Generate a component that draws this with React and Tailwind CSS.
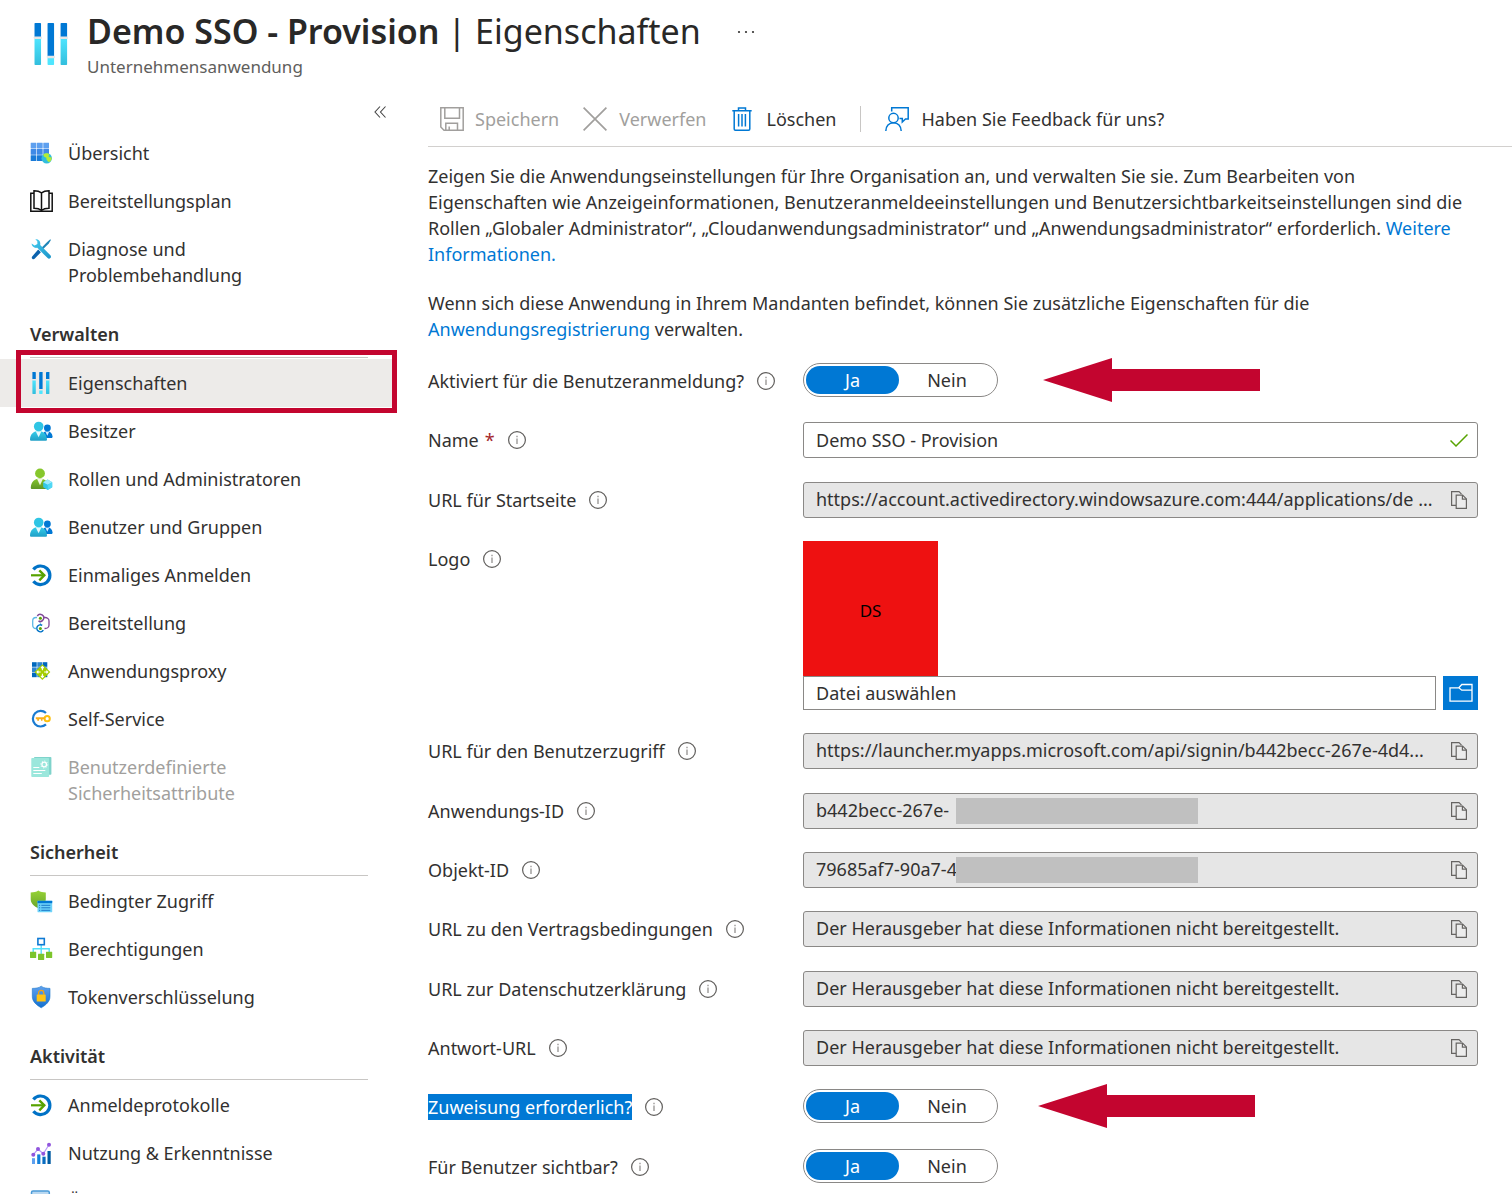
import React from "react";

const svg24 = { viewBox: "0 0 24 24", className: "h-[26px] w-6 shrink-0", "aria-hidden": true };

function SliderBars() {
  const bars = [
    [3.4, 8.6],
    [10.2, 18.6],
    [17, 8.6],
  ];
  return (
    <>
      <defs>
        <linearGradient id="cyanBar" x1="0" y1="0" x2="0" y2="1">
          <stop offset="0" stopColor="#50e6ff" />
          <stop offset="1" stopColor="#32bedd" />
        </linearGradient>
      </defs>
      {bars.map(([x, y]) => (
        <g key={x}>
          <rect x={x} y="1" width="3.4" height={y - 1} rx="0.4" fill="#0078d4" />
          <rect x={x} y={y} width="3.4" height={23 - y} rx="0.4" fill={y > 10 ? "#50e6ff" : "url(#cyanBar)"} />
          <rect x={x - 0.4} y={y - 0.5} width="4.2" height="1.3" rx="0.4" fill="#e6e6e6" />
        </g>
      ))}
    </>
  );
}

function OverviewIcon() {
  const colors = ["#5ea0ef", "#3f8ae6", "#1a7bd8"];
  return (
    <svg {...svg24}>
      {[0, 1, 2].map((r) =>
        [0, 1, 2].map((c) => (
          <rect key={`${r}${c}`} x={1.7 + c * 6.3} y={1.7 + r * 6.3} width="5.7" height="5.7" rx="0.3" fill={colors[r]} />
        ))
      )}
      <circle cx="17.7" cy="17.3" r="5.2" fill="#32bedd" />
      <path d="M14.2 13.5c1.5-1.3 3.600-1.600 5.200-1l1.300 1.400-1.500 1.100 1.800 1.500 1.500-.5c.4 1.700-.1 3.400-1.200 4.600l-1.800.3-1.900-2.200-.3-2-2.100-.9z" fill="#b4ec36" />
    </svg>
  );
}

function BookIcon() {
  return (
    <svg {...svg24} fill="none" stroke="#111" strokeWidth="1.5">
      <path d="M5 4.300H1.800V22.200H23.200V4.300H20" />
      <path d="M12.500 3.800C10.500 2.300 8 1.800 5 1.800V19.300C8 19.300 10.500 19.800 12.500 21.500C14.500 19.800 17 19.300 20 19.300V1.800C17 1.800 14.500 2.300 12.500 3.800ZM12.500 3.800V21.500" />
    </svg>
  );
}

function ToolsIcon() {
  return (
    <svg {...svg24}>
      <defs>
        <linearGradient id="wrench" x1="0" y1="0" x2="1" y2="1">
          <stop offset="0" stopColor="#45cdf0" />
          <stop offset="1" stopColor="#1a93c8" />
        </linearGradient>
      </defs>
      <path d="M21.300 2.200l.6.700-2.100 3.700-6.300 6.100-1.500-1.400 6.200-6.300z" fill="#1f86b8" />
      <path d="M9.200 12.500l2.700 2.700-6.300 6.600c-.7.600-1.600.6-2.300-.1s-.7-1.700-.1-2.300z" fill="#0b62ad" />
      <path d="M6.300 2.300c2.900-.5 5.300 1.700 5 4.700l-.1 1 10.200 10.200c.8.900.8 2.100 0 2.900s-2 .8-2.800 0L8.300 10.800C5.300 11.600 2.600 9.300 2.600 6.600L5.600 8.600 8.400 6.900 8.300 4.200z" fill="url(#wrench)" />
    </svg>
  );
}

function PeopleIcon() {
  return (
    <svg {...svg24}>
      <defs>
        <linearGradient id="person" x1="0" y1="0" x2="0" y2="1">
          <stop offset="0" stopColor="#35cdea" />
          <stop offset="1" stopColor="#1f9fc6" />
        </linearGradient>
      </defs>
      <path d="M14.500 13.500c1-.8 2.400-1.200 3.700-1.200 3 0 5 2 5.400 5.200.1.900-.5 1.500-1.300 1.500h-6z" fill="#0078d4" />
      <path d="M16.300 12.500l2 4.200 2-4.200z" fill="#d8edfb" />
      <circle cx="18.400" cy="9" r="3.400" fill="#0078d4" />
      <path d="M1 20.200c.4-5 3.600-8.100 8.500-8.100s8 3.100 8.500 8.100c.1.900-.6 1.600-1.400 1.600H2.400C1.600 21.800.9 21.100 1 20.200z" fill="url(#person)" />
      <path d="M6.700 12.300L9.600 18.300 12.500 12.300z" fill="#e6f9fd" />
      <circle cx="9.700" cy="7.500" r="4.800" fill="#2fc5e4" />
    </svg>
  );
}

function RolesIcon() {
  return (
    <svg {...svg24}>
      <defs>
        <linearGradient id="greenPerson" x1="0" y1="0" x2="0" y2="1">
          <stop offset="0" stopColor="#86c72c" />
          <stop offset="1" stopColor="#5e9624" />
        </linearGradient>
      </defs>
      <path d="M1.800 20.500c.4-5.400 3.500-9 9-9s8.600 3.600 9 9c.1.900-.5 1.600-1.400 1.600H3.200c-.9 0-1.500-.7-1.400-1.600z" fill="url(#greenPerson)" />
      <path d="M8 11.800L11 18.200 14 11.800z" fill="#f0f8e4" />
      <circle cx="11" cy="6.400" r="4.900" fill="#86c72c" />
      <path d="M18.700 12.600l4.500 2.600v5.100l-4.500 2.600-4.500-2.600v-5.100z" fill="#32c8ea" />
      <path d="M18.700 12.600l4.500 2.600-4.500 2.600-4.500-2.600z" fill="#9cebff" />
      <path d="M18.700 17.800l4.500-2.600v5.100l-4.500 2.600z" fill="#50d8f5" />
    </svg>
  );
}

function SignOnIcon() {
  return (
    <svg {...svg24} fill="none">
      <path d="M4.400 6.400A9.300 9.300 0 1 1 4.400 18.200" stroke="#0072c6" strokeWidth="3.200" />
      <path d="M2 12.300H15" stroke="#57a300" strokeWidth="2.200" />
      <path d="M10.300 7.300L15.300 12.300 10.300 17.300" stroke="#57a300" strokeWidth="2.400" />
    </svg>
  );
}

function ProvisionIcon() {
  return (
    <svg {...svg24} fill="none" strokeWidth="1.300">
      <path d="M8 6.500H7C5 6.500 3.700 8 3.700 10v4c0 2 1.300 3.500 3.300 3.500" stroke="#5cb8e6" />
      <path d="M15 6.500h1c2.200 0 4 1.500 4 3.500v4c0 2-1.800 3.500-4 3.500h-.5" stroke="#804998" />
      <path d="M8.300 5A3.500 3.500 0 1 1 9.500 10" stroke="#804998" strokeWidth="1.500" />
      <path d="M14.300 19.200A3.500 3.500 0 1 1 13.200 14.300" stroke="#0072c6" strokeWidth="1.500" />
      <circle cx="11.400" cy="7.200" r="1.500" fill="#57a300" />
      <circle cx="11.400" cy="17.400" r="1.500" fill="#57a300" />
      <path d="M10.500 11.500l1.300.9-1.300 1" stroke="#5cb8e6" strokeWidth="0.800" />
    </svg>
  );
}

function ProxyIcon() {
  return (
    <svg {...svg24}>
      {[0, 1, 2].map((r) =>
        [0, 1, 2].map((c) => (
          <rect key={`${r}${c}`} x={3 + c * 5.300} y={3.200 + r * 5.200} width="4.700" height="4.600" fill={(r + c) % 2 ? "#2f86cf" : "#0068bd"} />
        ))
      )}
      <path d="M13.400 5.200L21.300 13 13.400 20.900 5.500 13z" fill="#a5ce00" />
      <path
        d="M13.400 7.800v3.500M12 9l1.400-1.400L14.800 9M13.400 18.200v-3.500M12 17l1.400 1.400 1.400-1.400M8.200 13h3.500M9.400 11.600L8 13l1.400 1.400M18.600 13h-3.500M17.400 11.600l1.400 1.400-1.400 1.400"
        stroke="#fff"
        strokeWidth="1.100"
        fill="none"
      />
    </svg>
  );
}

function SelfServiceIcon() {
  return (
    <svg {...svg24} fill="none">
      <path d="M17 6A7.800 7.800 0 1 0 17 17.400" stroke="#1a7bd0" strokeWidth="2.200" />
      <circle cx="18.200" cy="11.700" r="2.600" stroke="#fcc00f" strokeWidth="2" />
      <path d="M15.600 11.200H6.800M8.200 12.800H10M12 12.800H13.500" stroke="#f9ae1b" strokeWidth="1.900" />
    </svg>
  );
}

function AttributesIcon() {
  return (
    <svg {...svg24}>
      <rect x="5" y="2" width="17.400" height="17.800" rx="0.800" fill="#7fd3cb" />
      <rect x="2.300" y="3" width="17.800" height="19" rx="0.800" fill="#9be7dc" />
      <circle cx="15.200" cy="9.500" r="2.300" fill="none" stroke="#fff" strokeWidth="1.300" />
      <circle cx="15.200" cy="9.500" r="3.500" fill="none" stroke="#fff" strokeWidth="0.900" strokeDasharray="1.100 1.600" />
      <path d="M4.300 12.500h6M4.300 15.500h12M4.300 18.500h8.500" stroke="#fff" strokeWidth="1.200" />
    </svg>
  );
}

function ConditionalIcon() {
  return (
    <svg {...svg24}>
      <defs>
        <linearGradient id="greenShield" x1="0" y1="0" x2="0" y2="1">
          <stop offset="0" stopColor="#97d335" />
          <stop offset="1" stopColor="#6aa52a" />
        </linearGradient>
      </defs>
      <path d="M9.300 1.400c2 1.600 4.700 1.800 7.500 2v6.800c0 4.500-3.600 7-7.500 9-3.900-2-7.600-4.500-7.600-9V3.400c2.900-.2 5.600-.4 7.600-2z" fill="url(#greenShield)" />
      <rect x="8.500" y="11.800" width="14.700" height="11.400" rx="0.400" fill="#6fd3f9" />
      <rect x="8.500" y="11.800" width="14.700" height="2.400" fill="#0078d4" />
      <path d="M10 16.300h1.200M10 18.800h1.200M10 21.300h1.200M12.300 16.300h9M12.300 18.800h9M12.300 21.300h9" stroke="#1b78c8" strokeWidth="1" />
    </svg>
  );
}

function PermissionsIcon() {
  return (
    <svg {...svg24}>
      <path d="M12.200 8v9M4.200 15.500V11.700H20.200V15.500" fill="none" stroke="#50e0fa" strokeWidth="1.400" />
      <rect x="8.900" y="1.500" width="6.400" height="6.200" fill="#fff" stroke="#0f7ad4" strokeWidth="1.600" />
      <rect x="1" y="14.700" width="6.200" height="6.300" rx="0.400" fill="#7cc52c" />
      <rect x="9" y="16.800" width="6.200" height="6.200" rx="0.400" fill="#7cc52c" />
      <rect x="17" y="14.700" width="6.200" height="6.300" rx="0.400" fill="#7cc52c" />
    </svg>
  );
}

function TokenIcon() {
  return (
    <svg {...svg24}>
      <defs>
        <linearGradient id="tokenShield" x1="0" y1="0" x2="0" y2="1">
          <stop offset="0" stopColor="#5ea0ef" />
          <stop offset="1" stopColor="#1370cf" />
        </linearGradient>
      </defs>
      <path d="M12.200 1.200c2.500 1.900 5.500 2.100 8.800 2.200v8c0 5.300-4.300 8.700-8.800 11.400C7.700 20.100 3.300 16.700 3.300 11.400v-8c3.300-.1 6.400-.3 8.900-2.200z" fill="url(#tokenShield)" stroke="#1b77c9" strokeWidth="0.600" />
      <path d="M9.600 9.800V8.100c0-1.600 1.100-2.700 2.600-2.700s2.600 1.100 2.600 2.700v1.700" fill="none" stroke="#f5a30f" strokeWidth="1.300" />
      <rect x="7.700" y="9.500" width="9" height="6.900" rx="0.500" fill="#ffc415" />
    </svg>
  );
}

function UsageIcon() {
  return (
    <svg {...svg24}>
      <rect x="3" y="17.200" width="3" height="5.800" fill="#5ea0ef" />
      <rect x="8.200" y="13.400" width="3.200" height="9.600" fill="#1380da" />
      <rect x="13.400" y="15.700" width="3.200" height="7.300" fill="#0a6cc0" />
      <rect x="18.500" y="10" width="3.200" height="13" fill="#005ba1" />
      <path d="M4.300 13.700L9 8.200l5.300 4.500L20 3.700" fill="none" stroke="#b796f9" strokeWidth="1.200" />
      <g fill="#9155dd">
        <circle cx="4.300" cy="13.700" r="2" />
        <circle cx="9" cy="8" r="2" />
        <circle cx="14.300" cy="12.700" r="2" />
        <circle cx="20" cy="3.700" r="2" />
      </g>
    </svg>
  );
}

function AuditIcon() {
  return (
    <svg {...svg24}>
      <rect x="2.500" y="2" width="17.800" height="20" rx="1.500" fill="#b9d8f1" stroke="#4b9bd8" strokeWidth="1.500" />
    </svg>
  );
}

function PropertiesIcon() {
  return (
    <svg {...svg24}>
      <SliderBars />
    </svg>
  );
}

function InfoIcon() {
  return (
    <svg viewBox="0 0 20 20" className="size-5 shrink-0" role="img" aria-label="Info" fill="none">
      <circle cx="10" cy="10" r="8.400" stroke="#605e5c" strokeWidth="1.200" />
      <path d="M10 8.500V14M10 5.800V7.200" stroke="#8a8886" strokeWidth="1.200" />
    </svg>
  );
}

function CopyIcon() {
  return (
    <svg viewBox="0 0 18 20" className="h-5 w-[18px]" aria-hidden="true" fill="none" stroke="#666462" strokeWidth="1.200">
      <path d="M6 15.400H1.600V1.600H9L11.500 4.100" />
      <path d="M6.200 5.100H12.600L16.400 8.900V18.400H6.200Z" fill="#ececec" />
      <path d="M12.400 5.100V9.100H16.400" />
    </svg>
  );
}

const navGroups = [
  {
    items: [
      ["Übersicht", OverviewIcon],
      ["Bereitstellungsplan", BookIcon],
      ["Diagnose und Problembehandlung", ToolsIcon],
    ],
  },
  {
    title: "Verwalten",
    items: [
      ["Eigenschaften", PropertiesIcon],
      ["Besitzer", PeopleIcon],
      ["Rollen und Administratoren", RolesIcon],
      ["Benutzer und Gruppen", PeopleIcon],
      ["Einmaliges Anmelden", SignOnIcon],
      ["Bereitstellung", ProvisionIcon],
      ["Anwendungsproxy", ProxyIcon],
      ["Self-Service", SelfServiceIcon],
      ["Benutzerdefinierte Sicherheitsattribute", AttributesIcon],
    ],
  },
  {
    title: "Sicherheit",
    items: [
      ["Bedingter Zugriff", ConditionalIcon],
      ["Berechtigungen", PermissionsIcon],
      ["Tokenverschlüsselung", TokenIcon],
    ],
  },
  {
    title: "Aktivität",
    items: [
      ["Anmeldeprotokolle", SignOnIcon],
      ["Nutzung & Erkenntnisse", UsageIcon],
      ["Überwachungsprotokolle", AuditIcon],
    ],
  },
];

function NavItem({ label, Icon }) {
  const active = label === "Eigenschaften";
  const disabled = label.startsWith("Benutzerdefinierte");
  return (
    <li className="relative">
      <a
        href="#"
        aria-current={active ? "page" : undefined}
        aria-disabled={disabled || undefined}
        className={`flex items-start gap-[15px] py-[11px] pl-[29px] ${active ? "bg-[#edebe9]" : ""} ${disabled ? "text-[#a19f9d]" : ""}`}
      >
        <Icon />
        <span className="max-w-60">{label}</span>
      </a>
      {active && <div className="pointer-events-none absolute -top-[9px] right-0 -bottom-[6px] left-4 border-5 border-[#c3052f]" />}
    </li>
  );
}

function Sidebar() {
  return (
    <nav aria-label="Menü" className="w-[397px] shrink-0 pt-2">
      <div className="flex h-6 items-center justify-end pr-[9px]">
        <button type="button" aria-label="Menü reduzieren">
          <svg viewBox="0 0 16 16" className="size-4" fill="none" stroke="#444" strokeWidth="1.100">
            <path d="M8 2.500L3 8l5 5.500M13.500 2.500L8.500 8l5 5.500" />
          </svg>
        </button>
      </div>
      <div className="pt-[5px]">
        {navGroups.map((g, i) => (
          <section key={i}>
            {g.title && (
              <h2 className="mr-[29px] mb-px ml-[30px] border-b border-[#c8c6c4] pt-[22px] pb-[10px] font-semibold">{g.title}</h2>
            )}
            <ul>
              {g.items.map(([label, Icon]) => (
                <NavItem key={label} label={label} Icon={Icon} />
              ))}
            </ul>
          </section>
        ))}
      </div>
    </nav>
  );
}

function Toolbar() {
  return (
    <div className="flex h-[55px] items-center border-b border-[#d2d0ce] pl-3">
      <button type="button" disabled className="flex items-center gap-[11px] text-[#a19f9d]">
        <svg viewBox="0 0 24 24" className="size-6" fill="none" stroke="#a19f9d" strokeWidth="1.500">
          <path d="M.8.800H23.200V23.200H4L.8 20ZM4.800.800V11.200H19.500V.800M5.800 23V16.200H17.500V23M9.200 23V19.500" />
        </svg>
        Speichern
      </button>
      <button type="button" disabled className="ml-6 flex items-center gap-3 text-[#a19f9d]">
        <svg viewBox="0 0 24 24" className="size-6" fill="none" stroke="#a19f9d" strokeWidth="1.700">
          <path d="M.6.600L23.400 23.400M23.400.600L.6 23.400" />
        </svg>
        Verwerfen
      </button>
      <button type="button" className="ml-6 flex items-center gap-3">
        <svg viewBox="0 0 24 24" className="size-6" fill="none" stroke="#0078d4" strokeWidth="1.500">
          <path d="M2.300 3.700H21.700M8.500 3.700V1H15.500V3.700M4.200 3.700V22C4.200 22.700 4.700 23.200 5.400 23.200H18.600C19.300 23.200 19.800 22.700 19.800 22V3.700M8.600 7V19.500M12 7V19.500M15.400 7V19.500" />
        </svg>
        Löschen
      </button>
      <div className="mx-6 h-[26px] w-px bg-[#c8c6c4]" />
      <button type="button" className="flex items-center gap-3">
        <svg viewBox="0 0 24 24" className="size-6" fill="none" stroke="#0078d4" strokeWidth="1.500">
          <path d="M6.700 4.500V.800H23.200V12H20.500L17.300 15V11.500H14.500" />
          <circle cx="8.500" cy="11" r="4.700" />
          <path d="M.8 24C.8 19 4 15.700 8.500 15.700S16.200 19 16.200 24" />
        </svg>
        Haben Sie Feedback für uns?
      </button>
    </div>
  );
}

function Row({ label, id, required, selected, children }) {
  return (
    <div className="grid min-h-9 grid-cols-[375px_minmax(0,1fr)] items-start">
      <div className="flex h-9 items-center gap-3">
        <label htmlFor={id} className={selected ? "bg-[#0078d4] text-white" : ""}>
          {label}
          {required && <span className="ml-1.5 text-[#a4262c]">*</span>}
        </label>
        <InfoIcon />
      </div>
      {children}
    </div>
  );
}

function Toggle({ id }) {
  const option = "flex h-7 cursor-pointer items-center justify-center rounded-full peer-checked:bg-[#0078d4] peer-checked:text-white";
  return (
    <div role="radiogroup" className="flex h-[34px] w-[195px] items-center rounded-full border border-[#8a8886] px-0.5">
      <div className="relative w-[93px]">
        <input id={id} type="radio" name={id} defaultChecked className="peer sr-only" />
        <label htmlFor={id} className={option}>Ja</label>
      </div>
      <div className="relative flex-1">
        <input id={`${id}-nein`} type="radio" name={id} className="peer sr-only" />
        <label htmlFor={`${id}-nein`} className={option}>Nein</label>
      </div>
    </div>
  );
}

function Arrow({ className }) {
  return (
    <svg viewBox="0 0 217 44" className={`absolute -top-[5px] h-11 w-[217px] ${className}`} aria-hidden="true">
      <path d="M0 22L69 0V11H217V33H69V44Z" fill="#c3052f" />
    </svg>
  );
}

function ReadOnly({ id, value, masked }) {
  return (
    <div className="relative flex h-9 items-center rounded-[3px] border border-[#8a8886] bg-[#e6e6e6] pr-[9px] pl-3">
      <input id={id} readOnly value={value} className="min-w-0 flex-1 bg-transparent pb-0.5 text-ellipsis outline-none" />
      {masked && <span className="absolute top-1 left-[152px] h-[26px] w-[242px] bg-[#c0c0c0]" />}
      <button type="button" aria-label="Kopieren" className="ml-2">
        <CopyIcon />
      </button>
    </div>
  );
}

const missing = "Der Herausgeber hat diese Informationen nicht bereitgestellt.";

export default function App() {
  return (
    <div className="flex h-screen flex-col overflow-hidden bg-white font-['Noto_Sans',sans-serif] text-[18px] leading-[26px] text-[#323130]">
      <header className="flex h-[92px] shrink-0 items-start pl-7">
        <svg viewBox="0 0 24 24" className="mt-[21px] size-[46px] shrink-0" aria-hidden="true">
          <SliderBars />
        </svg>
        <div className="ml-[13px] pt-2">
          <h1 className="flex gap-2 text-[34px] leading-[46px] text-[#292827]">
            <span className="font-semibold">Demo SSO - Provision</span>
            <span>| Eigenschaften</span>
          </h1>
          <p className="text-[17px] text-[#605e5c]">Unternehmensanwendung</p>
        </div>
        <button type="button" aria-label="Weitere Aktionen" className="mt-[22px] ml-9">
          <svg viewBox="0 0 18 20" className="h-5 w-[18px]" fill="#323130">
            <circle cx="2" cy="10" r="1.100" />
            <circle cx="9" cy="10" r="1.100" />
            <circle cx="16" cy="10" r="1.100" />
          </svg>
        </button>
      </header>

      <div className="flex min-h-0 flex-1">
        <Sidebar />
        <main className="ml-[31px] min-w-0 flex-1">
          <Toolbar />
          <div className="pt-4 pr-[34px]">
            <p className="max-w-[1044px]">
              Zeigen Sie die Anwendungseinstellungen für Ihre Organisation an, und verwalten Sie sie. Zum Bearbeiten von
              Eigenschaften wie Anzeigeinformationen, Benutzeranmeldeeinstellungen und Benutzersichtbarkeitseinstellungen sind die
              Rollen „Globaler Administrator“, „Cloudanwendungsadministrator“ und „Anwendungsadministrator“ erforderlich.{" "}
              <a href="#" className="text-[#0078d4]">Weitere Informationen.</a>
            </p>
            <p className="mt-[23px] max-w-[960px]">
              Wenn sich diese Anwendung in Ihrem Mandanten befindet, können Sie zusätzliche Eigenschaften für die{" "}
              <a href="#" className="text-[#0078d4]">Anwendungsregistrierung</a> verwalten.
            </p>

            <form className="mt-[21px] flex flex-col gap-6">
              <div className="flex flex-col gap-[23px]">
                <Row label="Aktiviert für die Benutzeranmeldung?" id="aktiviert">
                  <div className="relative">
                    <Toggle id="aktiviert" />
                    <Arrow className="left-60" />
                  </div>
                </Row>
                <Row label="Name" id="name" required>
                  <div className="flex h-9 items-center rounded-[3px] border border-[#8a8886] pr-[9px] pl-3">
                    <input id="name" defaultValue="Demo SSO - Provision" className="min-w-0 flex-1 outline-none" />
                    <svg viewBox="0 0 18 18" className="size-[18px]" fill="none" stroke="#57a300" strokeWidth="1.500" aria-hidden="true">
                      <path d="M.5 9.500L6 15 17.500 3.500" />
                    </svg>
                  </div>
                </Row>
              </div>

              <div className="flex flex-col gap-[23px]">
                <Row label="URL für Startseite" id="startseite">
                  <ReadOnly id="startseite" value="https://account.activedirectory.windowsazure.com:444/applications/de ..." />
                </Row>
                <Row label="Logo" id="logo">
                  <div>
                    <div className="flex size-[135px] items-center justify-center bg-[#ee1111] pt-1 text-[17px] text-black">DS</div>
                    <div className="flex h-[34px] gap-[7px]">
                      <input id="logo" readOnly value="Datei auswählen" className="min-w-0 flex-1 border border-[#8a8886] px-3 outline-none" />
                      <button type="button" aria-label="Durchsuchen" className="flex w-[35px] items-center justify-center bg-[#0078d4]">
                        <svg viewBox="0 0 24 20" className="h-5 w-6" fill="none" stroke="#fff" strokeWidth="1.300">
                          <path d="M1 4.800H9.800L12.800 1.500H23V18.200H1ZM9.800 4.800L12.800 7.200H23" />
                        </svg>
                      </button>
                    </div>
                  </div>
                </Row>
                <Row label="URL für den Benutzerzugriff" id="zugriff">
                  <ReadOnly id="zugriff" value="https://launcher.myapps.microsoft.com/api/signin/b442becc-267e-4d4..." />
                </Row>
              </div>

              <div className="flex flex-col gap-[23px]">
                <Row label="Anwendungs-ID" id="appid">
                  <ReadOnly id="appid" value="b442becc-267e-" masked />
                </Row>
                <Row label="Objekt-ID" id="objid">
                  <ReadOnly id="objid" value="79685af7-90a7-4" masked />
                </Row>
                <Row label="URL zu den Vertragsbedingungen" id="vertrag">
                  <ReadOnly id="vertrag" value={missing} />
                </Row>
              </div>

              <div className="flex flex-col gap-[23px]">
                <Row label="URL zur Datenschutzerklärung" id="datenschutz">
                  <ReadOnly id="datenschutz" value={missing} />
                </Row>
                <Row label="Antwort-URL" id="antwort">
                  <ReadOnly id="antwort" value={missing} />
                </Row>
                <Row label="Zuweisung erforderlich?" id="zuweisung" selected>
                  <div className="relative">
                    <Toggle id="zuweisung" />
                    <Arrow className="left-[235px]" />
                  </div>
                </Row>
              </div>

              <Row label="Für Benutzer sichtbar?" id="sichtbar">
                <Toggle id="sichtbar" />
              </Row>
            </form>
          </div>
        </main>
      </div>
    </div>
  );
}
